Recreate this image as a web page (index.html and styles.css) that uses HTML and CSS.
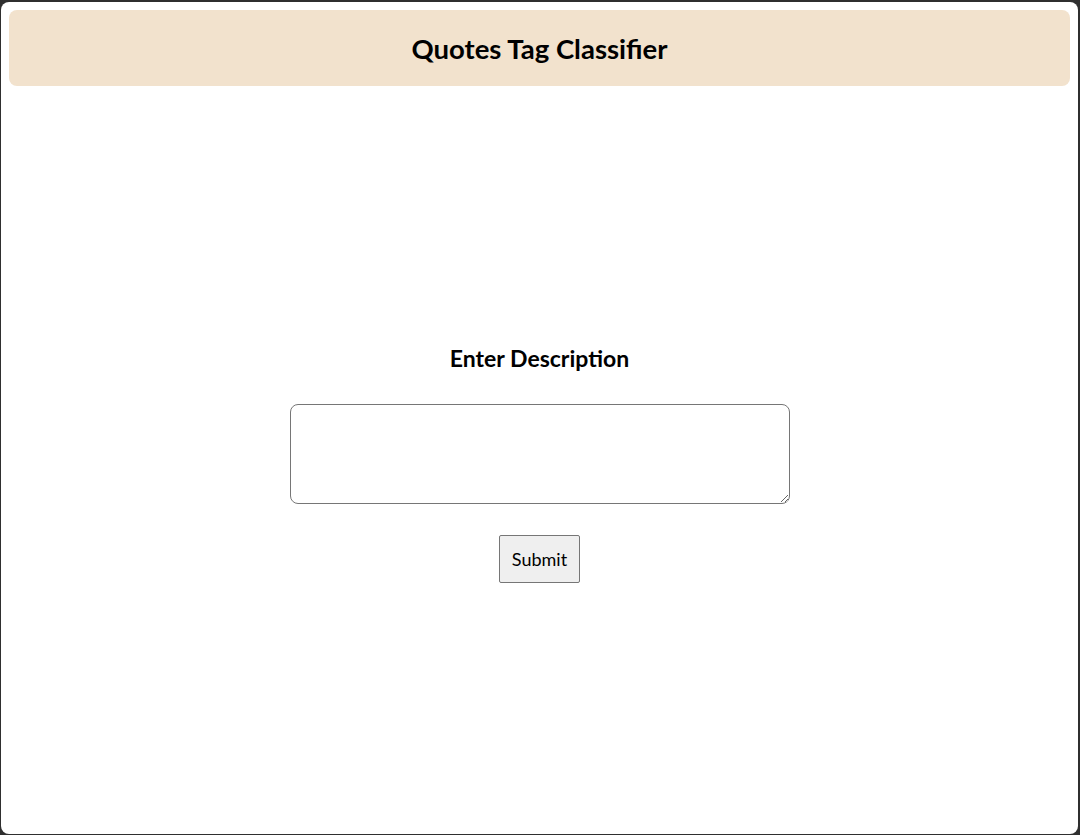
FILE: index.html
```html
<!DOCTYPE html>
<html lang="en">
<head>
<meta charset="utf-8">
<title>Quotes Tag Classifier</title>
<link rel="stylesheet" href="styles.css">
</head>
<body>
<div class="window">
  <header class="topbar">
    <h1 class="title">Quotes Tag Classifier</h1>
  </header>
  <main class="content">
    <form class="form">
      <label class="label" for="desc">Enter Description</label>
      <textarea id="desc" class="input"></textarea>
      <button type="button" class="submit">Submit</button>
    </form>
  </main>
</div>
</body>
</html>
```

FILE: styles.css
```css
html {
  background: #2f2f2f;
}
body {
  margin: 0;
  padding: 2px 2px 1px 1px;
  height: 835px;
  box-sizing: border-box;
  font-family: Lato, "Open Sans", sans-serif;
  color: #000;
}
.window {
  background: #fff;
  height: 100%;
  border-radius: 8px;
  padding: 8px;
  box-sizing: border-box;
  display: flex;
  flex-direction: column;
}
.topbar {
  background: #f2e2cd;
  border-radius: 8px;
  height: 76px;
  flex-shrink: 0;
  display: flex;
  align-items: center;
  justify-content: center;
}
.title {
  margin: 0;
  font-size: 27.5px;
  font-weight: 700;
}
.content {
  flex: 1;
  display: flex;
  justify-content: center;
}
.form {
  display: flex;
  flex-direction: column;
  align-items: center;
  padding-top: 258px;
}
.label {
  font-size: 23px;
  font-weight: 700;
  line-height: 28px;
}
.input {
  margin-top: 32px;
  width: 500px;
  height: 100px;
  box-sizing: border-box;
  border: 1px solid #767676;
  border-radius: 8px;
  font-family: inherit;
}
.submit {
  margin-top: 31px;
  width: 81px;
  height: 48px;
  background: #efefef;
  border: 1px solid #767676;
  border-radius: 2px;
  font-family: inherit;
  font-size: 18px;
  color: #000;
}
```
